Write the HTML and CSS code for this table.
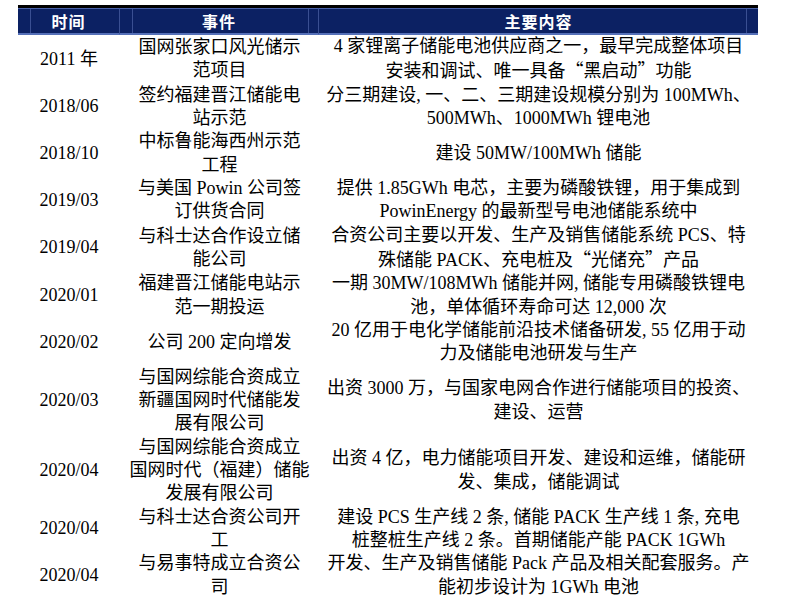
FILE: index.html
```html
<!DOCTYPE html>
<html lang="zh-CN">
<head>
<meta charset="utf-8">
<title>储能业务发展历程</title>
<link rel="stylesheet" href="styles.css">
</head>
<body>
<div class="page">
  <div class="grid">
    <div class="topbar"></div>
    <div class="hc hc1">时间</div>
    <div class="hc hc2">事件</div>
    <div class="hc hc3">主要内容</div>

    <div class="c">2011 年</div>
    <div class="c">国网张家口风光储示<br>范项目</div>
    <div class="c"><div>4 家锂离子储能电池供应商之一，最早完成整体项目<br>安装和调试、唯一具备<span class="q">“黑启动”</span>功能</div></div>

    <div class="c">2018/06</div>
    <div class="c">签约福建晋江储能电<br>站示范</div>
    <div class="c">分三期建设, 一、二、三期建设规模分别为 100MWh、<br>500MWh、1000MWh 锂电池</div>

    <div class="c">2018/10</div>
    <div class="c">中标鲁能海西州示范<br>工程</div>
    <div class="c">建设 50MW/100MWh 储能</div>

    <div class="c">2019/03</div>
    <div class="c">与美国 Powin 公司签<br>订供货合同</div>
    <div class="c">提供 1.85GWh 电芯，主要为磷酸铁锂，用于集成到<br>PowinEnergy 的最新型号电池储能系统中</div>

    <div class="c">2019/04</div>
    <div class="c">与科士达合作设立储<br>能公司</div>
    <div class="c"><div>合资公司主要以开发、生产及销售储能系统 PCS、特<br>殊储能 PACK、充电桩及<span class="q">“光储充”</span>产品</div></div>

    <div class="c">2020/01</div>
    <div class="c">福建晋江储能电站示<br>范一期投运</div>
    <div class="c">一期 30MW/108MWh 储能并网, 储能专用磷酸铁锂电<br>池，单体循环寿命可达 12,000 次</div>

    <div class="c">2020/02</div>
    <div class="c">公司 200 定向增发</div>
    <div class="c">20 亿用于电化学储能前沿技术储备研发, 55 亿用于动<br>力及储能电池研发与生产</div>

    <div class="c">2020/03</div>
    <div class="c">与国网综能合资成立<br>新疆国网时代储能发<br>展有限公司</div>
    <div class="c">出资 3000 万，与国家电网合作进行储能项目的投资、<br>建设、运营</div>

    <div class="c">2020/04</div>
    <div class="c">与国网综能合资成立<br>国网时代（福建）储能<br>发展有限公司</div>
    <div class="c">出资 4 亿，电力储能项目开发、建设和运维，储能研<br>发、集成，储能调试</div>

    <div class="c">2020/04</div>
    <div class="c">与科士达合资公司开<br>工</div>
    <div class="c">建设 PCS 生产线 2 条, 储能 PACK 生产线 1 条, 充电<br>桩整桩生产线 2 条。首期储能产能 PACK 1GWh</div>

    <div class="c">2020/04</div>
    <div class="c">与易事特成立合资公<br>司</div>
    <div class="c">开发、生产及销售储能 Pack 产品及相关配套服务。产<br>能初步设计为 1GWh 电池</div>
  </div>
</div>
</body>
</html>
```

FILE: styles.css
```css
html, body {
  margin: 0;
  padding: 0;
  background: #ffffff;
}

body {
  width: 787px;
  height: 595px;
  overflow: hidden;
  font-family: "Liberation Serif", "Noto Sans CJK SC", serif;
  color: #000000;
}

.page {
  padding: 5px 0 0 18px;
}

.grid {
  display: grid;
  grid-template-columns: 102px 199px 439px;
  width: 740px;
}

.topbar {
  grid-column: 1 / -1;
  height: 3px;
  background: #000000;
}

.hc {
  position: relative;
  box-sizing: border-box;
  height: 27px;
  background: #0c2163;
  border-top: 1px solid #4a62a8;
  border-bottom: 2px solid #5570b8;
  color: #ffffff;
  font-family: "Liberation Serif", "Noto Sans CJK SC", serif;
  font-weight: bold;
  font-size: 16px;
  letter-spacing: 1px;
  display: flex;
  align-items: center;
  justify-content: center;
}

.hc1,
.hc2 {
  border-right: 1px solid #3a4f92;
}

.hc1::before,
.hc2::before {
  content: "";
  position: absolute;
  top: 0;
  bottom: 0;
  left: 12px;
  width: 1px;
  background: #3a4f92;
}

.hc2::after {
  content: "";
  position: absolute;
  top: 0;
  bottom: 0;
  right: 9px;
  width: 1px;
  background: #3a4f92;
}

.hc3::after {
  content: "";
  position: absolute;
  top: 0;
  bottom: 0;
  right: 11px;
  width: 1px;
  background: #3a4f92;
}

.c {
  display: flex;
  align-items: center;
  justify-content: center;
  text-align: center;
  white-space: nowrap;
  font-size: 18px;
  line-height: 23.33px;
}

.q {
  font-family: "Noto Sans CJK SC", sans-serif;
}
```
